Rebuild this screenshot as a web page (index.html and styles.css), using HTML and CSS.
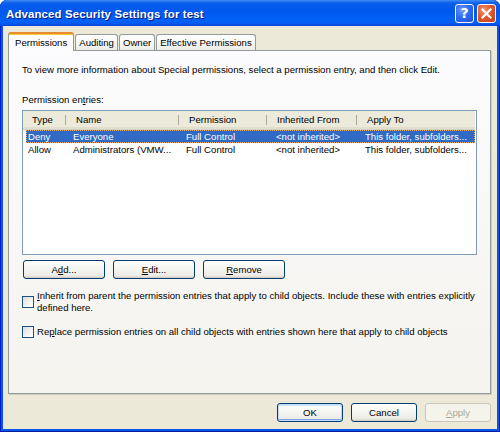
FILE: index.html
```html
<!DOCTYPE html>
<html>
<head>
<meta charset="utf-8">
<link rel="stylesheet" href="styles.css">
</head>
<body>
<div class="window">
  <div class="titlebar">
    <span class="title">Advanced Security Settings for test</span>
    <div class="tb-buttons">
      <div class="tb-btn help">?</div>
      <div class="tb-btn close">
        <svg width="17" height="17" viewBox="0 0 17 17"><path d="M4.5 4.5 L12.5 12.5 M12.5 4.5 L4.5 12.5" stroke="#fff" stroke-width="2.2" stroke-linecap="square"/></svg>
      </div>
    </div>
  </div>
  <div class="client">
    <div class="tabs">
      <div class="tab active">Permissions</div>
      <div class="tab">Auditing</div>
      <div class="tab">Owner</div>
      <div class="tab">Effective Permissions</div>
    </div>
    <div class="panel">
      <p class="desc">To view more information about Special permissions, select a permission entry, and then click Edit.</p>
      <p class="label">Permission en<u>t</u>ries:</p>
      <div class="listbox">
        <div class="lv-header">
          <div class="hcell">Type</div>
          <div class="hcell">Name</div>
          <div class="hcell">Permission</div>
          <div class="hcell">Inherited From</div>
          <div class="hcell">Apply To</div>
        </div>
        <div class="lv-body">
          <div class="lv-row selected">
            <div class="cell">Deny</div>
            <div class="cell">Everyone</div>
            <div class="cell">Full Control</div>
            <div class="cell">&lt;not inherited&gt;</div>
            <div class="cell">This folder, subfolders...</div>
          </div>
          <div class="lv-row">
            <div class="cell">Allow</div>
            <div class="cell">Administrators (VMW...</div>
            <div class="cell">Full Control</div>
            <div class="cell">&lt;not inherited&gt;</div>
            <div class="cell">This folder, subfolders...</div>
          </div>
        </div>
      </div>
      <div class="btn-row">
        <button class="btn wide">A<u>d</u>d...</button>
        <button class="btn wide"><u>E</u>dit...</button>
        <button class="btn wide"><u>R</u>emove</button>
      </div>
      <div class="check first">
        <span class="box"></span>
        <span class="ctext"><u>I</u>nherit from parent the permission entries that apply to child objects. Include these with entries explicitly<br>defined here.</span>
      </div>
      <div class="check">
        <span class="box"></span>
        <span class="ctext">Re<u>p</u>lace permission entries on all child objects with entries shown here that apply to child objects</span>
      </div>
    </div>
    <div class="footer">
      <button class="btn std default">OK</button>
      <button class="btn std">Cancel</button>
      <button class="btn std disabled"><u>A</u>pply</button>
    </div>
  </div>
</div>
</body>
</html>
```
FILE: styles.css
```css
* { box-sizing: border-box; }
html, body { margin: 0; padding: 0; background: #ffffff; }
body { font-family: "Liberation Sans", Arial, sans-serif; font-size: 9.6px; color: #000; }

.window {
  width: 500px;
  height: 432px;
  display: flex;
  flex-direction: column;
  background: #0756E4;
  border-radius: 7px 7px 0 0;
  overflow: hidden;
  box-shadow: inset 1px 0 #0019CF, inset -1px 0 #001EA0, inset 0 -1px #001EA0;
}

.titlebar {
  height: 26px;
  flex: none;
  display: flex;
  align-items: center;
  padding: 2px 4px 0 6px;
  background: linear-gradient(180deg, #3F8CF3 0%, #0A5EEC 12%, #0058EE 40%, #0061F8 82%, #0459F0 92%, #0045D8 100%);
  border-radius: 7px 7px 0 0;
}
.title {
  flex: 1;
  color: #fff;
  font-weight: bold;
  font-size: 11.4px;
  text-shadow: 1px 1px #0A1883;
  letter-spacing: 0.15px;
}
.tb-buttons { display: flex; gap: 3px; margin-top: -2px; }
.tb-btn {
  width: 19px;
  height: 19px;
  border: 1px solid #fff;
  border-radius: 3px;
  display: flex;
  align-items: center;
  justify-content: center;
}
.help {
  background: radial-gradient(circle at 35% 30%, #6D9BF8 0%, #2E6BF0 45%, #1F52D8 100%);
  color: #fff;
  font-family: "DejaVu Sans", sans-serif;
  font-weight: bold;
  font-size: 14px;
  line-height: 17px;
}
.close {
  background: radial-gradient(circle at 35% 30%, #F0926A 0%, #E0552B 50%, #C83E15 100%);
}

.client {
  flex: 1;
  margin: 0 3px 3px 3px;
  background: #ECE9D8;
  display: flex;
  flex-direction: column;
  padding: 6px 6px 7px 5px;
}

.tabs {
  height: 18px;
  display: flex;
  align-items: flex-end;
  flex: none;
  position: relative;
  z-index: 1;
}
.tab {
  height: 16px;
  padding: 0 3px;
  margin-right: 1px;
  border: 1px solid #919B9C;
  border-bottom: none;
  border-radius: 3px 3px 0 0;
  background: linear-gradient(180deg, #FFFFFF 0%, #F7F7F5 50%, #ECEBE6 100%);
  line-height: 15px;
  white-space: nowrap;
}
.tab.active {
  height: 19px;
  margin-bottom: -1px;
  padding: 0 6px;
  border-top: 2px solid #E68B2C;
  box-shadow: inset 0 1px #FFC73C;
  background: #FCFCFE;
  line-height: 17px;
}

.panel {
  flex: 1;
  border: 1px solid #919B9C;
  box-shadow: 1px 1px 0 #D0CEBF;
  background: linear-gradient(180deg, #FCFCFE 0%, #F4F3EE 100%);
  padding: 12px 13px 0 13px;
  display: flex;
  flex-direction: column;
}
.desc { margin: 0; line-height: 13px; }
.label { margin: 17px 0 4px 0; line-height: 13px; }

.listbox {
  height: 145px;
  border: 1px solid #7F9DB9;
  background: #fff;
  flex: none;
}
.lv-header {
  display: grid;
  grid-template-columns: 44px 113px 88px 90px 1fr;
  height: 19px;
  background: #EBEADB;
  border-bottom: 1px solid #D6D2C2;
  box-shadow: inset 0 -2px #E2DECD;
  margin-right: 1px;
}
.hcell {
  padding-left: 9px;
  line-height: 17px;
  border-right: 1px solid transparent;
  background: linear-gradient(#ACA899, #ACA899) right 4px / 1px 10px no-repeat;
  white-space: nowrap;
}
.hcell:last-child { background: none; }
.lv-body { padding: 0 1px 0 3px; }
.lv-row {
  display: grid;
  grid-template-columns: 40px 113px 90px 89px 1fr;
  height: 13px;
  line-height: 13px;
  white-space: nowrap;
}
.cell { padding-left: 7px; overflow: hidden; }
.cell:first-child { padding-left: 2px; }
.lv-row.selected {
  background: #316AC5;
  color: #fff;
  outline: 1px dotted #E8B070;
  outline-offset: -1px;
}

.btn {
  font-family: inherit;
  font-size: inherit;
  color: #000;
  height: 19px;
  padding: 0;
  border: 1px solid #003C74;
  border-radius: 3px;
  background: linear-gradient(180deg, #FFFFFF 0%, #F6F6F3 40%, #ECEBE6 85%, #D6D0C5 100%);
  box-shadow: inset 0 -1px #D6D0C5;
}
.btn.wide { width: 82px; }
.btn.std { width: 66px; }
.btn.default {
  box-shadow: inset 0 0 0 1px #C2DAF8, inset 0 -2px 0 0 #7FA5E8, inset 0 2px 0 0 #CEE3FC;
}
.btn.disabled {
  color: #ACA899;
  border-color: #C9C7BA;
  background: #F5F4EA;
  box-shadow: none;
}

.btn-row {
  display: flex;
  gap: 8px;
  margin: 5px 0 0 1px;
}

.check {
  display: flex;
  align-items: center;
  gap: 3px;
  line-height: 12px;
}
.check.first { margin-top: 11px; }
.check + .check { margin-top: 12px; }
.box {
  width: 12px;
  height: 12px;
  flex: none;
  border: 1px solid #1C5180;
  background: linear-gradient(135deg, #DCDCD7 0%, #F4F4F0 60%, #FFFFFF 100%);
}

.footer {
  flex: none;
  display: flex;
  justify-content: flex-end;
  gap: 8px;
  margin-top: 9px;
  padding-right: 0;
}
```
